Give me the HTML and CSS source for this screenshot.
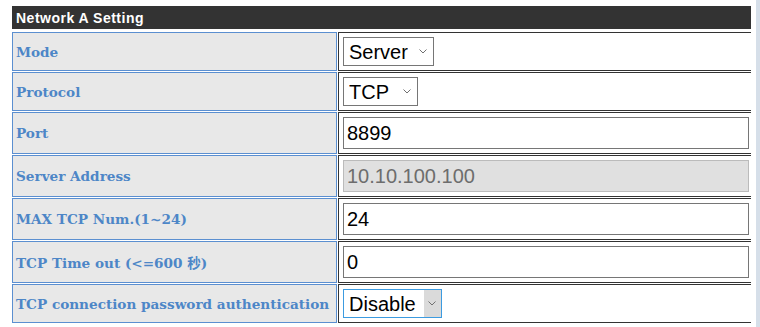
FILE: index.html
```html
<!DOCTYPE html>
<html lang="en">
<head>
  <meta charset="UTF-8" />
  <title>Network A Setting</title>
  <link rel="stylesheet" href="styles.css">
</head>
<body>
  <div class="page">
    <div class="panel">
      <div class="panel-title">Network A Setting</div>
      <table class="settings">
        <tr>
          <td class="label">Mode</td>
          <td class="field">
            <select class="pick">
              <option>Server</option>
              <option>Client</option>
            </select>
          </td>
        </tr>
        <tr>
          <td class="label">Protocol</td>
          <td class="field">
            <select class="pick">
              <option>TCP</option>
              <option>UDP</option>
            </select>
          </td>
        </tr>
        <tr>
          <td class="label">Port</td>
          <td class="field"><input type="text" class="text" value="8899" /></td>
        </tr>
        <tr>
          <td class="label">Server Address</td>
          <td class="field"><input type="text" class="text" value="10.10.100.100" disabled /></td>
        </tr>
        <tr>
          <td class="label">MAX TCP Num.(1~24)</td>
          <td class="field"><input type="text" class="text" value="24" /></td>
        </tr>
        <tr>
          <td class="label">TCP Time out (&lt;=600 秒)</td>
          <td class="field"><input type="text" class="text" value="0" /></td>
        </tr>
        <tr>
          <td class="label">TCP connection password authentication</td>
          <td class="field">
            <select class="pick active">
              <option>Disable</option>
              <option>Enable</option>
            </select>
          </td>
        </tr>
      </table>
    </div>
    <div class="scroll-edge"></div>
  </div>
</body>
</html>
```

FILE: styles.css
```css
body {
  margin: 0;
  background: #fff;
  font-family: "Liberation Sans", Arial, sans-serif;
}
.page {
  display: flex;
  height: 327px;
  padding-top: 6px;
  box-sizing: border-box;
}
.panel {
  width: 740px;
  margin-left: 11px;
  overflow: hidden;
}
.panel-title {
  margin-left: 1px;
  height: 23px;
  line-height: 24px;
  padding-left: 4px;
  background: #333;
  color: #fff;
  font-size: 14px;
  font-weight: bold;
  letter-spacing: 0.5px;
}
.settings {
  width: 744px;
  margin-top: 2px;
  border-collapse: separate;
  border-spacing: 1px;
  table-layout: fixed;
}
.settings td {
  padding: 4px 3px;
}
.label {
  width: 317px;
  background: #e8e8e8;
  border: 1px solid #5b8fd0;
  color: #4d86c7;
  font-family: "DejaVu Serif", "Noto Sans CJK SC", serif;
  font-size: 13.6px;
  font-weight: bold;
  white-space: nowrap;
}
.field {
  background: #fff;
  border: 1px solid #333;
  padding: 4px !important;
}
.pick {
  -webkit-appearance: none;
  appearance: none;
  display: block;
  height: 29px;
  margin: 0;
  padding: 0 25px 0 5px;
  border: 1px solid #767676;
  border-radius: 0;
  background: #fff url("data:image/svg+xml,%3Csvg xmlns='http://www.w3.org/2000/svg' width='8' height='5' viewBox='0 0 8 5'%3E%3Cpath d='M0.5 0.5 L4 4 L7.5 0.5' fill='none' stroke='%23707070' stroke-width='1'/%3E%3C/svg%3E") no-repeat right 6px center;
  color: #000;
  font-family: "Liberation Sans", Arial, sans-serif;
  font-size: 20px;
}
.pick.active {
  border-color: #3c9be0;
  background:
    url("data:image/svg+xml,%3Csvg xmlns='http://www.w3.org/2000/svg' width='8' height='5' viewBox='0 0 8 5'%3E%3Cpath d='M0.5 0.5 L4 4 L7.5 0.5' fill='none' stroke='%23707070' stroke-width='1'/%3E%3C/svg%3E") no-repeat right 5px center,
    linear-gradient(to left, #dadada 17px, #fff 17px);
}
.text {
  display: block;
  width: 100%;
  height: 32px;
  margin: 0;
  padding: 0 3px;
  box-sizing: border-box;
  border: 1px solid #767676;
  border-radius: 0;
  background: #fff;
  color: #000;
  font-family: "Liberation Sans", Arial, sans-serif;
  font-size: 20px;
}
.text:disabled {
  background: #e0e0e0;
  border-color: #bbb;
  color: #6d6d6d;
}
.scroll-edge {
  width: 4px;
  margin-left: auto;
  margin-top: -6px;
  background: #d6dfe9;
}
```
